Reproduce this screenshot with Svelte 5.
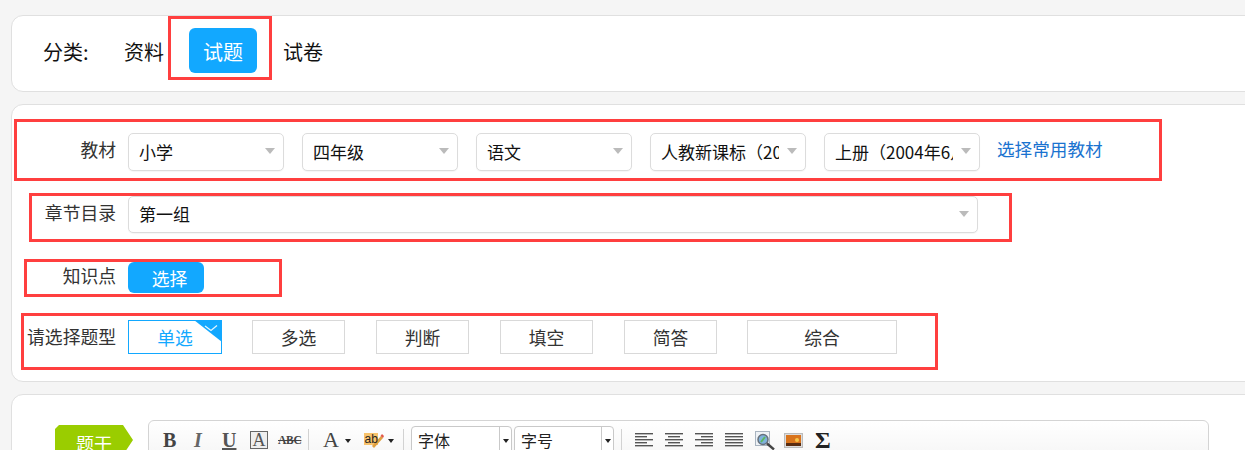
<script>
	const selects = [
		{ label: '小学' },
		{ label: '四年级' },
		{ label: '语文' },
		{ label: '人教新课标（2012教材版）' },
		{ label: '上册（2004年6月第1版）' }
	];

	const types = [
		{ label: '单选', active: true },
		{ label: '多选' },
		{ label: '判断' },
		{ label: '填空' },
		{ label: '简答' },
		{ label: '综合', wide: true }
	];

	const aligns = ['left', 'center', 'right', 'justify'];

	// red annotation boxes drawn over the form
	const marks = [
		{ x: 168, y: 16, w: 104, h: 64 },
		{ x: 14, y: 119, w: 1148, h: 62 },
		{ x: 29, y: 193, w: 983, h: 49 },
		{ x: 24, y: 259, w: 258, h: 38 },
		{ x: 21, y: 313, w: 917, h: 57 }
	];
</script>

<div class="page">
	<section class="card category">
		<span class="cat-label">分类:</span>
		<div class="cat-list">
			<span class="cat-item">资料</span>
			<span class="cat-item active">试题</span>
			<span class="cat-item">试卷</span>
		</div>
	</section>

	<section class="card form">
		<div class="row first">
			<span class="label">教材</span>
			<div class="selects">
				{#each selects as s}
					<div class="select">
						<span class="select-text">{s.label}</span>
						<i class="arrow"></i>
					</div>
				{/each}
				<a class="link" href="/">选择常用教材</a>
			</div>
		</div>

		<div class="row chapter">
			<span class="label">章节目录</span>
			<div class="select full">
				<span class="select-text">第一组</span>
				<i class="arrow"></i>
			</div>
		</div>

		<div class="row point">
			<span class="label">知识点</span>
			<button class="pick">选择</button>
		</div>

		<div class="row kinds">
			<span class="label">请选择题型</span>
			<div class="chips">
				{#each types as t}
					<div class="chip" class:active={t.active} class:wide={t.wide}>
						{t.label}
						{#if t.active}
							<span class="corner">
								<svg viewBox="0 0 28 22" width="28" height="22">
									<path d="M0 0H28V22Z" fill="#12a8ff" />
									<path d="M11 6l6 4.500 6-5" fill="none" stroke="#e4f5ff" stroke-width="1.300" />
								</svg>
							</span>
						{/if}
					</div>
				{/each}
			</div>
		</div>
	</section>

	<section class="card editor">
		<div class="tag">题干</div>
		<div class="toolbar">
			<span class="t bold">B</span>
			<span class="t ital">I</span>
			<span class="t under">U</span>
			<span class="t boxed">A</span>
			<span class="t strike">ABC</span>
			<i class="sep"></i>
			<span class="t color">A</span>
			<i class="caret"></i>
			<svg class="hilite" viewBox="0 0 20 15" width="20" height="15">
				<rect x="0" y="0" width="14" height="12" fill="#f8c36c" />
				<path d="M8 13L17 3l2 2-9 10z" fill="#e0a040" />
				<path d="M16.500 3l1.500-2 2 2-1 2z" fill="#e2584a" />
				<text x="0.500" y="10" font-size="12" font-family="Liberation Sans, sans-serif" fill="#222">ab</text>
			</svg>
			<i class="caret second"></i>
			<i class="sep"></i>
			<div class="combo font"><span>字体</span><b><i class="caret inner"></i></b></div>
			<div class="combo size"><span>字号</span><b><i class="caret inner"></i></b></div>
			<i class="sep third"></i>
			<div class="aligns">
				{#each aligns as a}
					<svg viewBox="0 0 18 15" width="18" height="15">
						{#each [0, 3, 6, 9, 12] as y, i}
							{@const long = a === 'justify' || i % 2 === 0}
							{@const w = long ? 18 : 12}
							{@const x = a === 'left' || long ? 0 : a === 'center' ? 3 : 6}
							<rect {x} y={y + 1} width={w} height="1.400" fill="#555" />
						{/each}
					</svg>
				{/each}
			</div>
			<svg class="search" viewBox="0 0 20 19" width="20" height="19">
				<rect x="0.500" y="0.500" width="14" height="14" fill="#eef2f6" stroke="#a9b4c0" />
				<circle cx="8" cy="8.500" r="5" fill="#7fb2dc" stroke="#66717d" stroke-width="1.500" />
				<path d="M6 11l4-5" stroke="#5cb85c" stroke-width="2" />
				<path d="M12 12.500l7 6" stroke="#444" stroke-width="2.400" />
			</svg>
			<svg class="pic" viewBox="0 0 19 15" width="19" height="15">
				<rect x="0.500" y="0.500" width="18" height="14" fill="#ddd" stroke="#bbb" />
				<rect x="2" y="2" width="15" height="11" fill="#d9741c" />
				<circle cx="13" cy="7" r="2" fill="#f7c64a" />
				<path d="M2 10h15v3H2z" fill="#5a2c10" />
			</svg>
			<span class="t sigma">Σ</span>
		</div>
	</section>

	{#each marks as m}
		<div class="mark" style="left:{m.x}px;top:{m.y}px;width:{m.w}px;height:{m.h}px"></div>
	{/each}
</div>

<style>
	:global(body) {
		background: #f5f5f5;
		overflow: hidden;
	}

	.page {
		position: relative;
		width: 1245px;
		height: 450px;
		overflow: hidden;
		padding: 15px 0 0 11px;
		box-sizing: border-box;
		font-family: 'Noto Sans CJK SC', 'Liberation Sans', sans-serif;
		color: #333;
	}

	.card {
		width: 1260px;
		background: #fff;
		border: 1px solid #e0e0e0;
		border-radius: 12px;
		box-sizing: border-box;
	}

	.category {
		height: 77px;
		margin-bottom: 12px;
		padding: 12px 0 0 31px;
		display: flex;
		font-size: 20px;
		color: #111;
	}

	.cat-label {
		width: 67px;
		line-height: 48px;
	}

	.cat-list {
		display: flex;
		gap: 12px;
	}

	.cat-item {
		height: 45px;
		line-height: 48px;
		padding: 0 14px;
		border-radius: 6px;
	}

	.cat-item:first-child {
		margin-right: -1px;
	}

	.cat-item.active {
		background: #12a8ff;
		color: #fff;
	}

	.form {
		height: 278px;
		margin-bottom: 12px;
		padding-top: 28px;
	}

	.row {
		display: flex;
		align-items: flex-start;
		font-size: 17.800px;
	}

	.chapter {
		margin-top: 25px;
	}

	.point {
		margin-top: 29px;
	}

	.kinds {
		margin-top: 27px;
	}

	.label {
		width: 104px;
		margin-right: 12px;
		text-align: right;
		line-height: 32px;
		white-space: nowrap;
	}

	.point .label {
		line-height: 27px;
	}

	.selects {
		display: flex;
		gap: 18px;
		align-items: flex-start;
	}

	.select {
		position: relative;
		width: 156px;
		height: 38px;
		padding: 0 26px 0 10px;
		box-sizing: border-box;
		border: 1px solid #dcdcdc;
		border-radius: 5px;
		background: #fff;
		font-size: 17px;
		line-height: 36px;
		color: #111;
		box-shadow: 0 1px 1px rgba(0, 0, 0, 0.04);
	}

	.select.full {
		width: 850px;
		height: 37px;
		line-height: 34px;
	}

	.select-text {
		display: block;
		overflow: hidden;
		white-space: nowrap;
	}

	.arrow {
		position: absolute;
		right: 8px;
		top: 14px;
		border: 5.500px solid transparent;
		border-top: 6px solid #bbb;
		border-bottom: 0;
	}

	.link {
		margin-left: -1px;
		color: #1a73d0;
		font-size: 17.600px;
		line-height: 32px;
		text-decoration: none;
	}

	.pick {
		width: 76px;
		height: 31px;
		padding: 0 0 0 7px;
		border: 0;
		border-radius: 6px;
		background: #12a8ff;
		color: #fff;
		font: inherit;
	}

	.chips {
		display: flex;
		gap: 31px;
	}

	.chip {
		position: relative;
		width: 93px;
		height: 34px;
		box-sizing: border-box;
		border: 1px solid #d9d9d9;
		text-align: center;
		line-height: 33px;
		background: #fff;
	}

	.chip.wide {
		width: 150px;
		margin-left: -1px;
	}

	.chip.active {
		width: 94px;
		margin-right: -1px;
		border-color: #12a8ff;
		color: #12a8ff;
	}

	.corner {
		position: absolute;
		top: -1px;
		right: -1px;
		height: 22px;
		line-height: 0;
	}

	.editor {
		height: 120px;
		padding: 25px 0 0 43px;
		display: flex;
		align-items: flex-start;
	}

	.tag {
		width: 78px;
		height: 40px;
		margin: 5px 15px 0 0;
		background: #9acd00;
		color: #fff;
		font-size: 18px;
		line-height: 36px;
		text-align: center;
		clip-path: polygon(0 4px, 4px 0, 68px 0, 78px 15px, 68px 30px, 68px 100%, 0 100%);
	}

	.toolbar {
		width: 1061px;
		height: 60px;
		box-sizing: border-box;
		display: flex;
		align-items: flex-start;
		padding: 5px 0 0 14px;
		border: 1px solid #d4d4d4;
		border-radius: 6px 6px 0 0;
		background: linear-gradient(#fff, #f0f0f0);
	}

	.t {
		font-family: 'Liberation Serif', serif;
		color: #444;
		line-height: 28px;
		font-size: 20px;
	}

	.bold {
		width: 13px;
		font-weight: 700;
	}

	.ital {
		width: 9px;
		margin-left: 18px;
		font-style: italic;
		font-weight: 700;
		color: #666;
	}

	.under {
		width: 14px;
		margin-left: 19px;
		text-decoration: underline;
		font-weight: 700;
		color: #555;
	}

	.boxed {
		width: 18px;
		height: 18px;
		margin: 5px 0 0 14px;
		box-sizing: border-box;
		border: 1px solid #666;
		background: #eee;
		line-height: 17px;
		text-align: center;
		font-size: 18px;
		color: #555;
	}

	.strike {
		margin-left: 10px;
		width: 21px;
		font-size: 11.500px;
		font-weight: 700;
		text-decoration: line-through;
		letter-spacing: -0.3px;
		white-space: nowrap;
	}

	.sep {
		width: 1px;
		height: 24px;
		margin: 3px 0 0 9px;
		background: #d2d2d2;
	}

	.color {
		width: 15px;
		margin-left: 14px;
		font-size: 22px;
		line-height: 27px;
	}

	.caret {
		width: 0;
		height: 0;
		margin: 13px 0 0 7px;
		border: 3px solid transparent;
		border-top: 4px solid #222;
		border-bottom: 0;
	}

	.hilite {
		margin: 7px 0 0 13px;
	}

	.caret.second {
		margin-left: 4px;
	}

	.combo {
		display: flex;
		height: 40px;
		box-sizing: border-box;
		border: 1px solid #c9c9c9;
		border-radius: 4px 4px 0 0;
		background: #fff;
		font-size: 16px;
		line-height: 26px;
		color: #222;
	}

	.combo span {
		padding-left: 6px;
		flex: 1;
	}

	.combo b {
		width: 11px;
		display: flex;
		justify-content: center;
		border-left: 1px solid #c9c9c9;
	}

	.caret.inner {
		margin: 12px 0 0;
	}

	.font {
		width: 101px;
		margin-left: 7px;
	}

	.size {
		width: 100px;
		margin-left: 2px;
	}

	.sep.third {
		margin-left: 7px;
	}

	.aligns {
		display: flex;
		gap: 12px;
		margin: 6px 12px 0 13px;
	}

	.search {
		margin-top: 5px;
	}

	.pic {
		margin: 7px 0 0 9px;
	}

	.sigma {
		margin-left: 12px;
		font-size: 24px;
		line-height: 28px;
		font-weight: 700;
		color: #222;
	}

	.mark {
		position: absolute;
		box-sizing: border-box;
		border: 3px solid #ff3f3f;
		pointer-events: none;
	}
</style>
